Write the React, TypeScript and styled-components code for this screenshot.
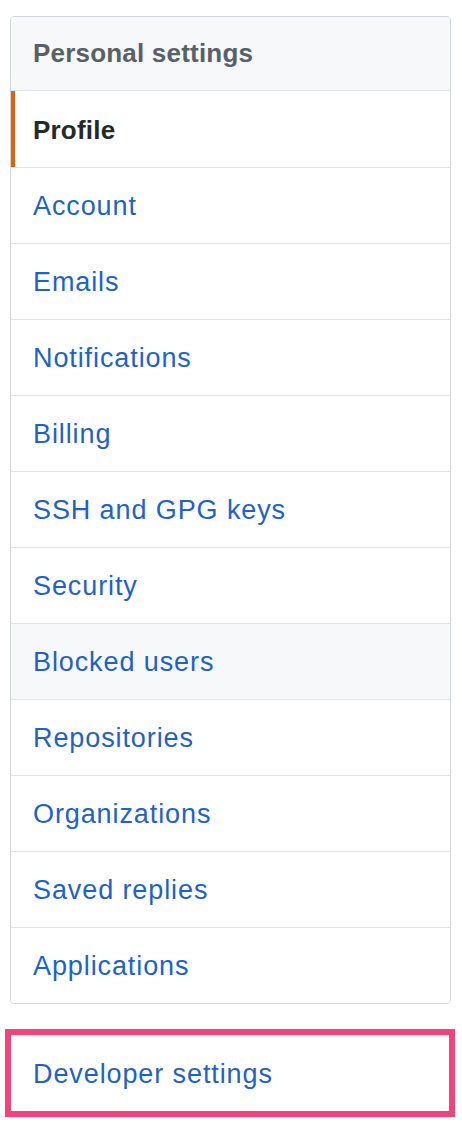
import React from 'react';
import styled, { createGlobalStyle } from 'styled-components';

const GlobalStyle = createGlobalStyle`
  html, body {
    margin: 0;
    padding: 0;
    background: #ffffff;
  }
  body {
    font-family: 'Liberation Sans', Arial, sans-serif;
  }
`;

const Page = styled.div`
  width: 462px;
  height: 1134px;
  box-sizing: border-box;
  padding: 16px 11px 0 5px;
  display: flex;
  flex-direction: column;
`;

const Menu = styled.nav`
  margin-left: 5px;
  border: 1px solid #d1d5da;
  border-radius: 4px;
  overflow: hidden;
  display: flex;
  flex-direction: column;
`;

const MenuHeader = styled.div`
  height: 74px;
  box-sizing: border-box;
  display: flex;
  align-items: center;
  padding-left: 22px;
  background-color: #f6f8fa;
  border-bottom: 1px solid #e1e4e8;
  font-size: 26px;
  font-weight: 700;
  letter-spacing: 0.2px;
  color: #586069;
`;

const MenuItem = styled.a<{ selected?: boolean; shaded?: boolean }>`
  position: relative;
  height: 76px;
  box-sizing: border-box;
  display: flex;
  align-items: center;
  padding-left: 22px;
  padding-top: 2px;
  border-top: 1px solid #e1e4e8;
  background-color: ${(p) => (p.shaded ? '#f6f8fa' : '#ffffff')};
  font-size: ${(p) => (p.selected ? '26px' : '27px')};
  font-weight: ${(p) => (p.selected ? 700 : 400)};
  letter-spacing: ${(p) => (p.selected ? '0.2px' : '0.9px')};
  color: ${(p) => (p.selected ? '#24292e' : '#1f62c4')};
  text-decoration: none;
  cursor: pointer;
  &:first-of-type {
    border-top: none;
  }
  ${(p) =>
    p.selected &&
    `
    &::before {
      content: '';
      position: absolute;
      left: 0;
      top: 0;
      bottom: 0;
      width: 4px;
      background-color: #e36209;
    }
  `}
`;

const Highlight = styled.div`
  margin-top: 25px;
  width: 450px;
  box-sizing: border-box;
  border: 6px solid #f0447b;
`;

const HighlightItem = styled(MenuItem)`
  height: 76px;
  border-top: none;
`;

const items = [
  'Account',
  'Emails',
  'Notifications',
  'Billing',
  'SSH and GPG keys',
  'Security',
  'Blocked users',
  'Repositories',
  'Organizations',
  'Saved replies',
  'Applications',
];

export default function App() {
  return (
    <Page>
      <GlobalStyle />
      <Menu>
        <MenuHeader>Personal settings</MenuHeader>
        <div>
          <MenuItem selected>Profile</MenuItem>
          {items.map((label) => (
            <MenuItem key={label} shaded={label === 'Blocked users'}>
              {label}
            </MenuItem>
          ))}
        </div>
      </Menu>
      <Highlight>
        <HighlightItem>Developer settings</HighlightItem>
      </Highlight>
    </Page>
  );
}
